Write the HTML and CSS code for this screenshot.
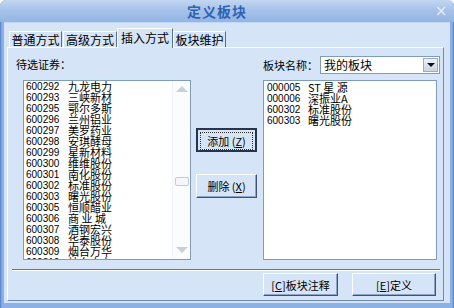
FILE: index.html
```html
<!DOCTYPE html>
<html lang="zh-CN">
<head>
  <meta charset="UTF-8">
  <title>定义板块</title>
  <link rel="stylesheet" href="styles.css">
</head>
<body>
  <div class="window">
    <div class="titlebar">
      <span class="title">定义板块</span>
      <span class="close">×</span>
    </div>

    <div class="client">
      <div class="tabs">
        <div class="tab">普通方式</div>
        <div class="tab">高级方式</div>
        <div class="tab active">插入方式</div>
        <div class="tab">板块维护</div>
      </div>

      <div class="panel">
        <div class="cols">
          <div class="col-left">
            <div class="label">待选证券：</div>
            <div class="listbox list-left">
              <div class="items" id="left-items"></div>
              <div class="scrollbar">
                <span class="arrow up"></span>
                <span class="thumb"></span>
                <span class="arrow down"></span>
              </div>
            </div>
          </div>

          <div class="col-mid">
            <button class="btn default"><span class="focus">添加 (<u>Z</u>)</span></button>
            <button class="btn">删除 (<u>X</u>)</button>
          </div>

          <div class="col-right">
            <div class="head">
              <span class="label">板块名称：</span>
              <div class="combo">
                <span class="combo-text">我的板块</span>
                <span class="combo-btn"><i></i></span>
              </div>
            </div>
            <div class="listbox list-right">
              <div class="items" id="right-items"></div>
            </div>
          </div>
        </div>

        <div class="separator"></div>

        <div class="actions">
          <button class="btn btn-note">[<u>C</u>]板块注释</button>
          <button class="btn btn-def">[<u>E</u>]定义</button>
        </div>
      </div>
    </div>
  </div>

  <script>
    const leftStocks = [
      ['600292', '九龙电力'], ['600293', '三峡新材'], ['600295', '鄂尔多斯'],
      ['600296', '兰州铝业'], ['600297', '美罗药业'], ['600298', '安琪酵母'],
      ['600299', '星新材料'], ['600300', '维维股份'], ['600301', '南化股份'],
      ['600302', '标准股份'], ['600303', '曙光股份'], ['600305', '恒顺醋业'],
      ['600306', '商 业 城'], ['600307', '酒钢宏兴'], ['600308', '华泰股份'],
      ['600309', '烟台万华'], ['600310', '桂东电力']
    ];
    const rightStocks = [
      ['000005', 'ST 星 源'], ['000006', '深振业A'],
      ['600302', '标准股份'], ['600303', '曙光股份']
    ];

    function fill(id, rows) {
      const box = document.getElementById(id);
      rows.forEach(([code, name]) => {
        const row = document.createElement('div');
        row.className = 'row';
        row.innerHTML = `<span class="code">${code}</span><span class="name">${name}</span>`;
        box.appendChild(row);
      });
    }

    fill('left-items', leftStocks);
    fill('right-items', rightStocks);
  </script>
</body>
</html>
```

FILE: styles.css
```css
body {
  margin: 0;
  width: 454px;
  height: 308px;
  overflow: hidden;
  font-family: "Noto Sans CJK SC", sans-serif;
  font-size: 12px;
  color: #000;
}

.window {
  width: 454px;
  height: 308px;
  display: flex;
  flex-direction: column;
  background: linear-gradient(to right, #4f7fca 0, #8db1e6 2px, #8db1e6 452px, #4f7fca 454px);
  border-radius: 6px 6px 0 0;
  box-sizing: border-box;
}

.titlebar {
  height: 22px;
  display: flex;
  align-items: center;
  border-radius: 6px 6px 0 0;
  background: linear-gradient(to bottom, #c3d6f1 0, #a6c2ea 45%, #93b5e4 100%);
}

.title {
  flex: 1;
  text-align: center;
  font-size: 14px;
  font-weight: bold;
  color: #2f63b2;
  letter-spacing: 1px;
  line-height: 22px;
}

.close {
  width: 14px;
  margin-right: 6px;
  color: #e4eefb;
  font-family: "DejaVu Sans", sans-serif;
  font-size: 15px;
  line-height: 22px;
  text-align: center;
}

.client {
  flex: 1;
  margin: 0 4px 5px 4px;
  padding: 5px 3px 0 3px;
  background: #d5e4f6;
  border-top: 1px solid #c4d8f3;
}

.tabs {
  height: 19px;
  display: flex;
  align-items: flex-end;
  padding-left: 2px;
  position: relative;
  z-index: 1;
}

.tab {
  width: 53px;
  height: 16px;
  box-sizing: border-box;
  line-height: 15px;
  border: 1px solid #fff;
  border-bottom: none;
  border-right: 1px solid #5b6f8f;
  background: #d5e4f6;
  font-size: 12px;
  text-align: center;
  white-space: nowrap;
  margin-right: 1px;
}

.tab:nth-child(2) {
  width: 54px;
}

.tab.active {
  width: 56px;
  height: 20px;
  line-height: 17px;
  margin-bottom: -1px;
  margin-left: -1px;
  margin-right: 0;
}

.panel {
  height: 252px;
  width: 435px;
  border: 1px solid;
  border-color: #fff #6f8cb9 #6f8cb9 #fff;
  display: flex;
  flex-direction: column;
}

.cols {
  display: flex;
  padding-top: 8px;
}

.label {
  white-space: nowrap;
  font-size: 11px;
}

.col-left {
  width: 182px;
  padding-left: 8px;
  box-sizing: border-box;
}

.col-left .label {
  height: 24px;
  line-height: 16px;
}

.listbox {
  height: 180px;
  background: #fff;
  border: 1px solid #7f9db9;
  box-sizing: border-box;
  overflow: hidden;
  display: flex;
}

.list-left {
  width: 168px;
  margin-left: 7px;
}

.items {
  flex: 1;
  padding: 0 0 0 2px;
  overflow: hidden;
}

.row {
  height: 11px;
  line-height: 11px;
  display: flex;
  white-space: pre;
}

.code {
  width: 42px;
  font-family: "Liberation Sans", sans-serif;
  font-size: 10px;
}

.name {
  font-size: 11px;
}

.scrollbar {
  width: 17px;
  border-left: 1px solid #eef2fa;
  background: #fbfcfe;
  display: flex;
  flex-direction: column;
  align-items: center;
}

.arrow {
  width: 0;
  height: 0;
  border-left: 6px solid transparent;
  border-right: 6px solid transparent;
}

.arrow.up {
  margin-top: 5px;
  border-bottom: 6px solid #c9d0dc;
}

.arrow.down {
  margin-top: auto;
  margin-bottom: 6px;
  border-top: 6px solid #c9d0dc;
}

.thumb {
  width: 12px;
  height: 7px;
  margin-top: 85px;
  border: 1px solid #c4cad6;
  border-radius: 2px;
  background: #f4f6fa;
}

.col-mid {
  width: 72px;
  padding-left: 6px;
  box-sizing: border-box;
  display: flex;
  flex-direction: column;
}

.btn {
  font-family: "Noto Sans CJK SC", sans-serif;
  font-size: 11px;
  white-space: nowrap;
  background: #d5e4f6;
  border: 1px solid;
  border-color: #fff #3e5476 #3e5476 #fff;
  box-shadow: inset -1px -1px 0 #8ea4c6;
  padding: 0;
  color: #000;
  line-height: 16px;
}

.col-mid .btn {
  width: 61px;
  height: 24px;
}

.btn.default {
  margin-top: 72px;
  border: 2px solid #26344c;
  box-shadow: none;
  padding: 2px;
}

.focus {
  display: block;
  height: 16px;
  border: 1px dotted #333;
}

.col-mid .btn + .btn {
  margin-top: 22px;
}

.col-right {
  width: 180px;
}

.head {
  height: 18px;
  display: flex;
  align-items: center;
  margin-bottom: 6px;
}

.head .label {
  width: 57px;
  padding-left: 1px;
}

.combo {
  width: 120px;
  height: 18px;
  box-sizing: border-box;
  border: 1px solid #7f9db9;
  background: #fff;
  display: flex;
  align-items: center;
}

.combo-text {
  flex: 1;
  padding-left: 3px;
  line-height: 16px;
}

.combo-btn {
  width: 15px;
  height: 14px;
  margin-right: 1px;
  background: linear-gradient(to bottom, #eef2f8, #c9d3e3);
  border: 1px solid #9aabc7;
  box-sizing: border-box;
  display: flex;
  align-items: center;
  justify-content: center;
}

.combo-btn i {
  border-left: 4px solid transparent;
  border-right: 4px solid transparent;
  border-top: 4px solid #111;
}

.list-right {
  width: 174px;
  margin-left: 1px;
}

.list-right .items {
  padding-left: 3px;
  padding-top: 1px;
}

.list-right .code {
  width: 41px;
}

.separator {
  margin: 9px 3px 0 4px;
  height: 1px;
  background: #5d77a3;
  border-bottom: 1px solid #fff;
}

.actions {
  display: flex;
  justify-content: flex-end;
  padding-right: 7px;
  margin-top: 2px;
  gap: 14px;
}

.btn-note {
  width: 75px;
  height: 23px;
}

.btn-def {
  width: 84px;
  height: 23px;
}
```
